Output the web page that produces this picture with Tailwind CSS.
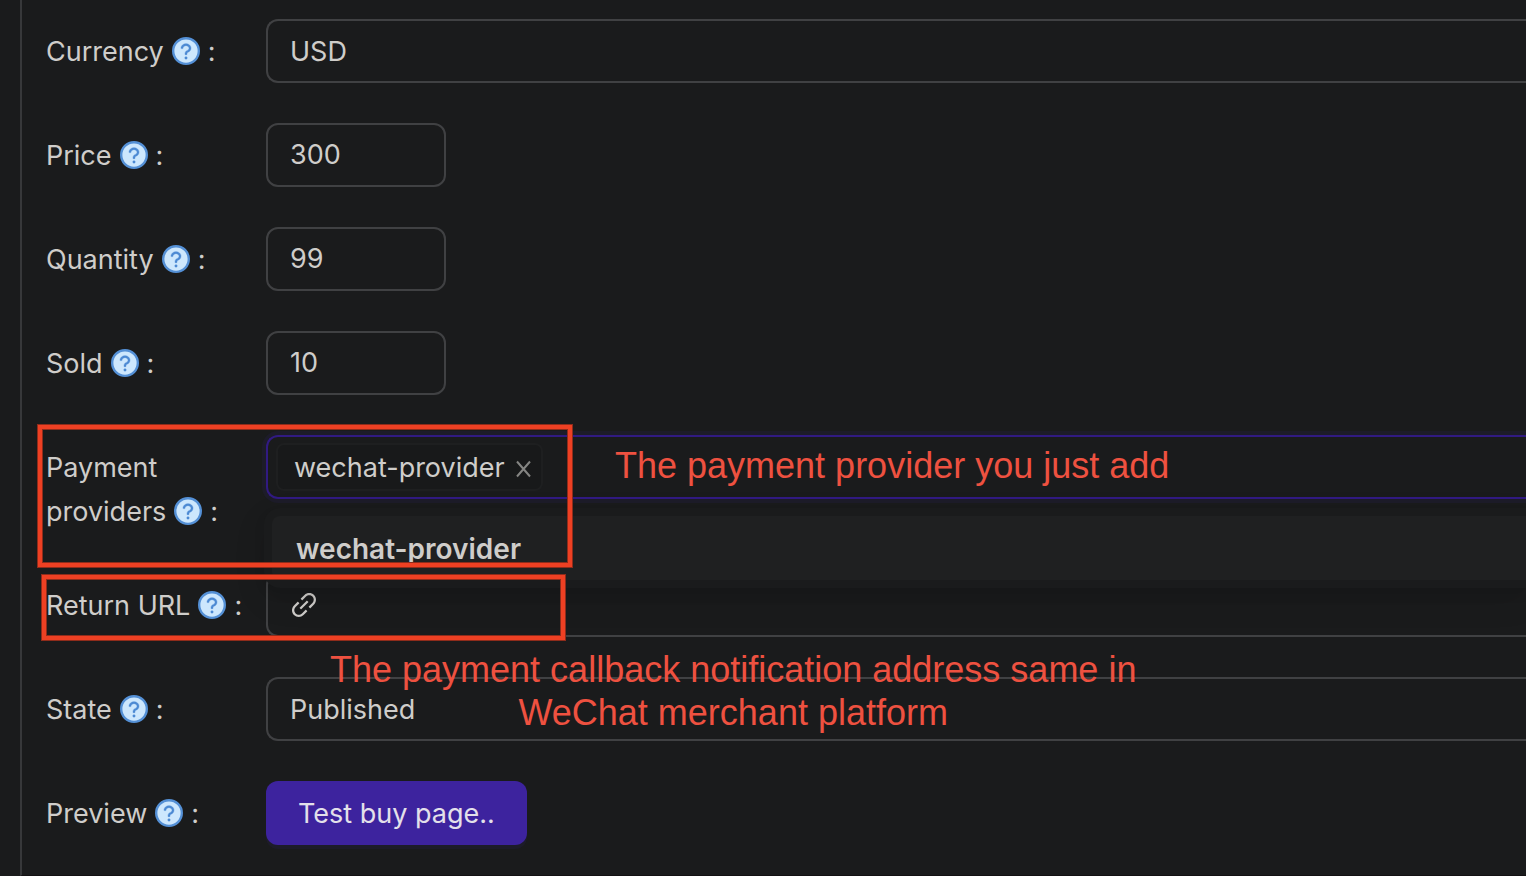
<!DOCTYPE html>
<html lang="en">
<head>
<meta charset="utf-8">
<meta name="viewport" content="width=device-width, initial-scale=1">
<title>Edit product</title>
<script src="https://cdn.jsdelivr.net/npm/@tailwindcss/browser@4"></script>
</head>
<body class="min-h-screen overflow-x-hidden bg-[#1a1b1c] pl-5 font-['Inter',sans-serif] text-[27px] text-[#cfcdca]">
<svg class="hidden" aria-hidden="true">
  <symbol id="help" viewBox="64 64 896 896">
    <circle cx="512" cy="512" r="410" fill="#cde7fd" stroke="#5490d6" stroke-width="76"/>
    <path fill="#4c89d3" stroke="#4c89d3" stroke-width="12" d="M623.600 316.700C593.600 290.400 554 276 512 276s-81.600 14.500-111.600 40.700C369.200 344 352 380.700 352 420v7.600c0 4.400 3.600 8 8 8h48c4.400 0 8-3.600 8-8V420c0-44.100 43.100-80 96-80s96 35.900 96 80c0 31.100-22 59.600-56.100 72.700-21.200 8.100-39.200 22.300-52.100 40.900-13.100 19-19.900 41.800-19.900 64.900V620c0 4.400 3.600 8 8 8h48c4.400 0 8-3.600 8-8v-22.700a48.300 48.300 0 0 1 30.900-44.800c59-22.700 97.100-74.700 97.100-132.500.1-39.300-17.100-76-48.300-103.300zM472 732a40 40 0 1 0 80 0 40 40 0 1 0-80 0z"/>
  </symbol>
</svg>
<form class="flex min-h-screen flex-col gap-10 border-b border-l-2 border-b-[#131113] border-l-[#37383a] pt-[19px] pb-[30px] pl-6">

  <div class="flex items-start">
    <label for="currency" class="w-[220px] shrink-0 pt-[11px] leading-[44px]">Currency<svg class="mx-2 inline size-7 align-[-4px]"><use href="#help"/></svg>:</label>
    <select id="currency" class="h-16 min-w-0 flex-1 appearance-none rounded-l-xl border-2 border-r-0 border-[#404143] bg-transparent px-[22px] pt-0.5 outline-none"><option>USD</option></select>
  </div>

  <div class="flex items-start">
    <label for="price" class="w-[220px] shrink-0 pt-[11px] leading-[44px]">Price<svg class="mx-2 inline size-7 align-[-4px]"><use href="#help"/></svg>:</label>
    <input id="price" type="text" inputmode="numeric" value="300" class="h-16 w-[180px] rounded-xl border-2 border-[#404143] bg-transparent px-[22px] pb-0.5 outline-none">
  </div>

  <div class="flex items-start">
    <label for="quantity" class="w-[220px] shrink-0 pt-[11px] leading-[44px]">Quantity<svg class="mx-2 inline size-7 align-[-4px]"><use href="#help"/></svg>:</label>
    <input id="quantity" type="text" inputmode="numeric" value="99" class="h-16 w-[180px] rounded-xl border-2 border-[#404143] bg-transparent px-[22px] pb-0.5 outline-none">
  </div>

  <div class="flex items-start">
    <label for="sold" class="w-[220px] shrink-0 pt-[11px] leading-[44px]">Sold<svg class="mx-2 inline size-7 align-[-4px]"><use href="#help"/></svg>:</label>
    <input id="sold" type="text" inputmode="numeric" value="10" class="h-16 w-[180px] rounded-xl border-2 border-[#404143] bg-transparent px-[22px] pb-0.5 outline-none">
  </div>

  <div class="relative z-10 flex items-start">
    <label for="providers" class="-mb-px w-[220px] shrink-0 pt-[11px] leading-[44px]">Payment<br>providers<svg class="mx-2 inline size-7 align-[-4px]"><use href="#help"/></svg>:</label>
    <div class="relative min-w-0 flex-1">
      <div class="flex h-16 items-center rounded-l-xl border-2 border-r-0 border-[#311a82] pl-2 shadow-[0_0_0_4px_#3d239e1a]">
        <span class="flex h-12 shrink-0 items-center gap-2 rounded-lg border-2 border-[#1e1f20] bg-[#18191a] pt-0.5 pr-2 pl-4">wechat-provider
          <button type="button" aria-label="Remove wechat-provider" class="text-[#858583]"><svg class="mt-0.5 size-5" viewBox="0 0 20 20" fill="none" stroke="currentColor" stroke-width="2"><path d="M4 2.500l13 15M17 2.500l-13 15"/></svg></button>
        </span>
        <input id="providers" type="text" class="min-w-0 flex-1 bg-transparent outline-none">
      </div>
      <!-- Open list of providers, over the next row -->
      <div role="listbox" aria-label="Payment providers" class="absolute top-[73px] right-0 -left-[2px] rounded-l-2xl bg-[#1a1b1c] py-2 pl-2 shadow-[0_12px_32px_#0000001a,0_6px_12px_#00000014]">
        <div role="option" aria-selected="true" class="h-16 rounded-l-lg bg-[#1f2021] pl-6 text-[28px] leading-[66px] font-semibold">wechat-provider</div>
      </div>
    </div>
    <div class="pointer-events-none absolute -top-[10px] -left-2 h-[142px] w-[534px] border-4 border-[#ee4023] shadow-[0_0_0_1px_#8f2c1b,inset_0_0_0_1px_#8f2c1b]"></div>
    <p class="pointer-events-none absolute top-[9px] left-[569px] font-['Liberation_Sans',sans-serif] text-[36px] leading-[43px] whitespace-nowrap text-[#ee5140]">The payment provider you just add</p>
  </div>

  <div class="relative flex items-start">
    <label for="return-url" class="w-[220px] shrink-0 pt-[11px] leading-[44px]">Return URL<svg class="mx-2 inline size-7 align-[-4px]"><use href="#help"/></svg>:</label>
    <div class="flex h-16 min-w-0 flex-1 items-center gap-2 rounded-l-xl border-2 border-r-0 border-[#404143] pl-[22px]">
      <svg class="size-7 shrink-0" viewBox="64 64 896 896" fill="currentColor" aria-hidden="true"><path d="M574 665.400a8.030 8.030 0 0 0-11.300 0L446.500 781.600c-53.800 53.800-144.600 59.500-204 0-59.500-59.500-53.800-150.200 0-204l116.200-116.200c3.100-3.100 3.100-8.200 0-11.300l-39.800-39.800a8.030 8.030 0 0 0-11.300 0L191.400 526.500c-84.600 84.600-84.600 221.500 0 306s221.500 84.600 306 0l116.200-116.200c3.100-3.100 3.100-8.200 0-11.300L574 665.400zm258.600-474c-84.600-84.600-221.500-84.600-306 0L410.300 307.600a8.030 8.030 0 0 0 0 11.300l39.700 39.700c3.100 3.100 8.200 3.100 11.300 0l116.200-116.200c53.800-53.800 144.600-59.500 204 0 59.500 59.500 53.800 150.200 0 204L665.300 562.600a8.030 8.030 0 0 0 0 11.300l39.800 39.800c3.100 3.100 8.200 3.100 11.300 0l116.200-116.200c84.500-84.600 84.500-221.500 0-306.100zM610.100 372.300a8.030 8.030 0 0 0-11.300 0L372.300 598.700a8.030 8.030 0 0 0 0 11.300l39.600 39.600c3.100 3.100 8.200 3.100 11.300 0l226.400-226.400c3.100-3.100 3.100-8.200 0-11.300l-39.500-39.600z"/></svg>
      <input id="return-url" type="url" class="min-w-0 flex-1 bg-transparent outline-none">
    </div>
    <div class="pointer-events-none absolute top-[2px] -left-1 z-20 h-[65px] w-[523px] border-4 border-[#ee4023] shadow-[0_0_0_1px_#8f2c1b,inset_0_0_0_1px_#8f2c1b]"></div>
    <p class="pointer-events-none absolute top-[75px] left-[284px] z-20 text-center font-['Liberation_Sans',sans-serif] text-[36px] leading-[43px] whitespace-nowrap text-[#ee5140]">The payment callback notification address same in<br>WeChat merchant platform</p>
  </div>

  <div class="flex items-start">
    <label for="state" class="w-[220px] shrink-0 pt-[11px] leading-[44px]">State<svg class="mx-2 inline size-7 align-[-4px]"><use href="#help"/></svg>:</label>
    <select id="state" class="h-16 min-w-0 flex-1 appearance-none rounded-l-xl border-2 border-r-0 border-[#404143] bg-transparent px-[22px] pt-0.5 outline-none"><option>Published</option></select>
  </div>

  <div class="flex items-start">
    <label for="preview" class="w-[220px] shrink-0 pt-[11px] leading-[44px]">Preview<svg class="mx-2 inline size-7 align-[-4px]"><use href="#help"/></svg>:</label>
    <button id="preview" type="button" class="h-16 rounded-xl bg-[#3d239e] px-8 pt-0.5 text-[#e3e0ea] shadow-[0_4px_0_#3d239e1a]">Test buy page..</button>
  </div>
</form>
</body>
</html>
